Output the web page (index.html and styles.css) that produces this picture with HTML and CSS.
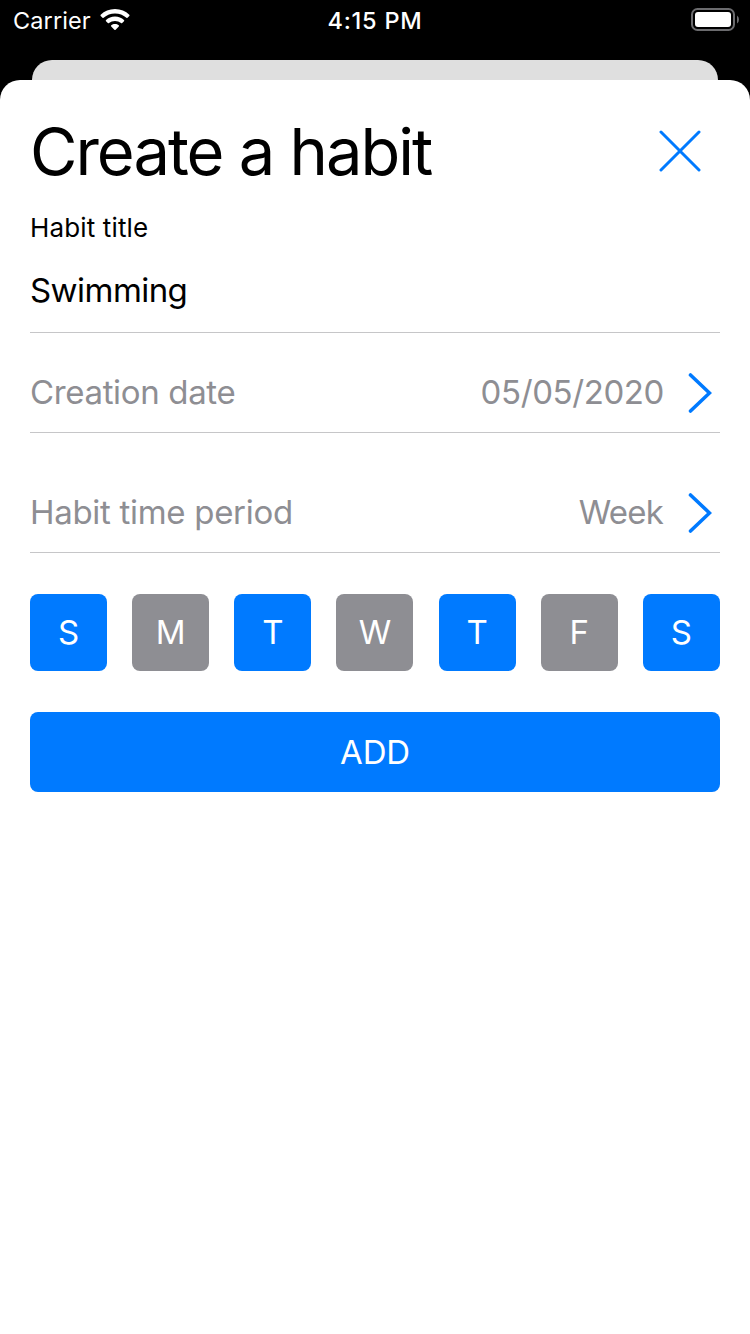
FILE: index.html
```
<!DOCTYPE html>
<html lang="en">
<head>
<meta charset="utf-8">
<title>Create a habit</title>
<link rel="stylesheet" href="styles.css">
</head>
<body>
<div class="status">
  <div class="status-left">
    <span class="carrier">Carrier</span>
    <svg class="wifi" width="30" height="22" viewBox="0 0 30 22" fill="#fff">
      <path d="M15 0C20.700 0 25.700 2.200 29.300 5.800Q29.900 6.400 29.300 7L27.500 8.800Q27 9.300 26.400 8.800C23.200 5.900 19.300 4.400 15 4.400S6.800 5.900 3.600 8.800Q3 9.300 2.500 8.800L.7 7Q.1 6.400 .7 5.800C4.300 2.200 9.300 0 15 0Z"/>
      <path d="M15 7.600C18.600 7.600 21.600 8.900 24 11.100Q24.500 11.700 24 12.200L22.200 14Q21.600 14.500 21 14C19.300 12.600 17.300 11.900 15 11.900S10.700 12.600 9 14Q8.400 14.500 7.800 14L6 12.200Q5.500 11.700 6 11.100C8.400 8.900 11.400 7.600 15 7.600Z"/>
      <path d="M15 15.100C16.500 15.100 17.700 15.600 18.700 16.300Q19.400 16.900 18.800 17.500L15.600 20.800Q15 21.400 14.400 20.800L11.200 17.500Q10.600 16.900 11.300 16.300C12.300 15.600 13.500 15.100 15 15.100Z"/>
    </svg>
  </div>
  <span class="clock">4:15 PM</span>
  <svg class="battery" width="48" height="24" viewBox="0 0 48 24">
    <rect x="1" y="1" width="42" height="21" rx="5.500" fill="none" stroke="#6b6b6e" stroke-width="2"/>
    <rect x="4" y="4" width="36" height="15" rx="3" fill="#fff"/>
    <path d="M46 7.500Q48 9 48 11.500T46 15.500Z" fill="#6b6b6e"/>
  </svg>
</div>
<div class="back-card"></div>
<main class="sheet">
  <header class="header">
    <h1 class="title">Create a habit</h1>
    <svg class="close" width="42" height="42" viewBox="0 0 42 42" fill="none" stroke="#007aff" stroke-width="3" stroke-linecap="round"><path d="M2 2L40 40M40 2L2 40"/></svg>
  </header>
  <div class="label">Habit title</div>
  <div class="input"><span class="swimming">Swimming</span></div>
  <div class="row date">
    <span class="name-date">Creation date</span>
    <span class="value value-date">05/05/2020</span>
    <svg class="chevron" width="24" height="40" viewBox="0 0 24 40" fill="none" stroke="#007aff" stroke-width="3.600" stroke-linecap="round"><path d="M2.500 2L21.500 20L2.500 38"/></svg>
  </div>
  <div class="row period">
    <span class="name-period">Habit time period</span>
    <span class="value value-period">Week</span>
    <svg class="chevron" width="24" height="40" viewBox="0 0 24 40" fill="none" stroke="#007aff" stroke-width="3.600" stroke-linecap="round"><path d="M2.500 2L21.500 20L2.500 38"/></svg>
  </div>
  <div class="days">
    <span class="day on">S</span><span class="day">M</span><span class="day on">T</span><span class="day">W</span><span class="day on">T</span><span class="day">F</span><span class="day on">S</span>
  </div>
  <div class="add">ADD</div>
</main>
</body>
</html>
```
FILE: styles.css
```
* { box-sizing: border-box; }
body {
  margin: 0;
  width: 750px;
  height: 1334px;
  overflow: hidden;
  display: flex;
  flex-direction: column;
  background: #000;
  color: #000;
  font-family: Inter, "Liberation Sans", sans-serif;
  font-size: 33px;
}
svg { display: block; flex: none; }
.status {
  height: 60px;
  padding: 0 11px 20px 13px;
  display: grid;
  grid-template-columns: 1fr auto 1fr;
  align-items: center;
  color: #fff;
  font-size: 23.5px;
  line-height: 38px;
}
.status-left { display: flex; align-items: center; gap: 9px; }
.carrier { padding-top: 2px; letter-spacing: 0.1px; }
.clock { padding-top: 2px; margin-right: 2px; font-weight: 500; letter-spacing: 0.75px; }
.battery { justify-self: end; }
.back-card {
  height: 20px;
  margin: 0 32px;
  border-radius: 20px 20px 0 0;
  background: #dfdfdf;
}
.sheet {
  flex: 1;
  padding: 41px 30px 0;
  border-radius: 20px 20px 0 0;
  background: #fff;
}
.header {
  height: 60px;
  display: flex;
  align-items: center;
  justify-content: space-between;
  padding-right: 19px;
}
.title {
  margin: 0;
  padding-top: 2px;
  font-size: 65px;
  font-weight: 400;
  line-height: 60px;
  letter-spacing: -2px;
}
.label { margin-top: 31px; padding-top: 1px; font-size: 26px; line-height: 30px; letter-spacing: 0.15px; }
.input {
  height: 90px;
  line-height: 94px;
  border-bottom: 1px solid #c6c6c8;
}
.swimming { letter-spacing: -0.55px; }
.row {
  height: 81px;
  display: flex;
  align-items: center;
  border-bottom: 1px solid #c6c6c8;
  color: #8e8e93;
}
.date { margin-top: 19px; }
.period { margin-top: 39px; }
.name-date { letter-spacing: -0.35px; }
.name-period { letter-spacing: -0.3px; }
.value { margin-left: auto; }
.value-date { letter-spacing: -0.4px; }
.value-period { padding-right: 1px; letter-spacing: -0.8px; }
.chevron { margin: 2px 8px 0 24px; }
.days {
  margin-top: 41px;
  display: flex;
  justify-content: space-between;
}
.day {
  width: 77px;
  height: 77px;
  border-radius: 8px;
  background: #8e8e93;
  color: #fff;
  line-height: 77px;
  text-align: center;
}
.on { background: #007aff; }
.add {
  height: 80px;
  margin-top: 41px;
  border-radius: 8px;
  background: #007aff;
  color: #fff;
  line-height: 80px;
  letter-spacing: -0.2px;
  text-align: center;
}
```
